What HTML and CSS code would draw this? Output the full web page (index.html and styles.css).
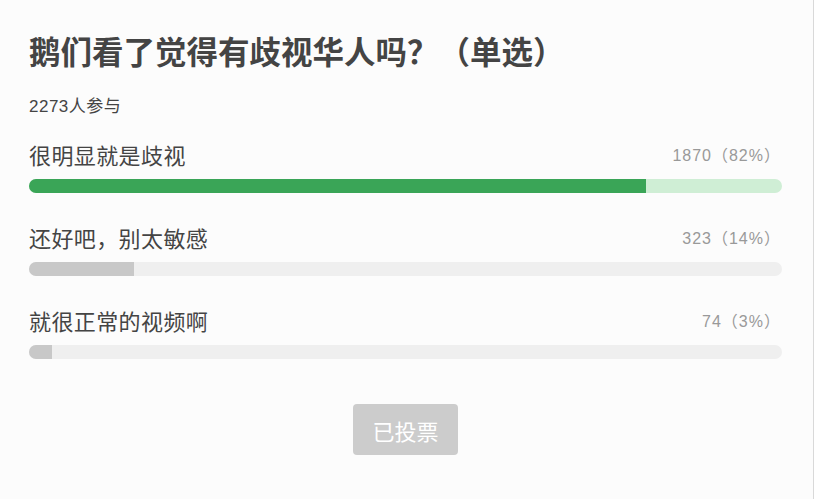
FILE: index.html
```html
<!DOCTYPE html>
<html lang="zh-CN">
<head>
<meta charset="utf-8">
<link rel="stylesheet" href="styles.css">
</head>
<body>
<div class="poll">
  <h1 class="title">鹅们看了觉得有歧视华人吗？（单选）</h1>
  <div class="count-total">2273人参与</div>
  <div class="options">
    <div class="option">
      <div class="option-head"><span class="label">很明显就是歧视</span><span class="num">1870（82%）</span></div>
      <div class="bar bar-green"><div class="fill" style="width:82%"></div></div>
    </div>
    <div class="option">
      <div class="option-head"><span class="label">还好吧，别太敏感</span><span class="num">323（14%）</span></div>
      <div class="bar"><div class="fill" style="width:14%"></div></div>
    </div>
    <div class="option">
      <div class="option-head"><span class="label">就很正常的视频啊</span><span class="num">74（3%）</span></div>
      <div class="bar"><div class="fill" style="width:3%"></div></div>
    </div>
  </div>
  <div class="actions"><button class="vote-btn" disabled>已投票</button></div>
</div>
</body>
</html>
```
FILE: styles.css
```css
html, body {
  margin: 0;
  padding: 0;
  background: #fcfcfc;
}
body {
  font-family: "Liberation Sans", "Noto Sans CJK SC", sans-serif;
  color: #444;
}
.poll {
  box-sizing: border-box;
  width: 814px;
  height: 499px;
  padding: 28px 31px 0 29px;
  border-right: 1px solid #d9d9d9;
  display: flex;
  flex-direction: column;
}
.title {
  margin: 0;
  font-family: "Noto Sans CJK SC", sans-serif;
  font-size: 31.5px;
  line-height: 44px;
  font-weight: 700;
  color: #444;
  white-space: nowrap;
}
.count-total {
  margin-top: 25px;
  font-size: 17px;
  line-height: 20px;
  letter-spacing: 0.5px;
  color: #444;
}
.options {
  margin-top: 22px;
  display: flex;
  flex-direction: column;
  gap: 29px;
}
.option {
  display: flex;
  flex-direction: column;
  gap: 10px;
}
.option-head {
  display: flex;
  justify-content: space-between;
  align-items: center;
  padding-right: 1px;
  height: 30px;
}
.label {
  font-family: "Noto Sans CJK SC", sans-serif;
  font-size: 22px;
  letter-spacing: 0.4px;
  color: #444;
}
.num {
  font-size: 16px;
  letter-spacing: 1px;
  color: #999;
}
.bar {
  height: 14px;
  border-radius: 7px;
  background: #efefef;
  overflow: hidden;
}
.bar .fill {
  height: 100%;
  background: #c8c8c8;
}
.bar-green {
  background: #cfeed5;
}
.bar-green .fill {
  background: #3aa557;
}
.actions {
  margin-top: 45px;
  display: flex;
  justify-content: center;
}
.vote-btn {
  width: 105px;
  height: 51px;
  border: none;
  border-radius: 4px;
  background: #cccccc;
  color: #fff;
  font-family: "Noto Sans CJK SC", sans-serif;
  font-size: 22px;
  padding: 0;
}
```
